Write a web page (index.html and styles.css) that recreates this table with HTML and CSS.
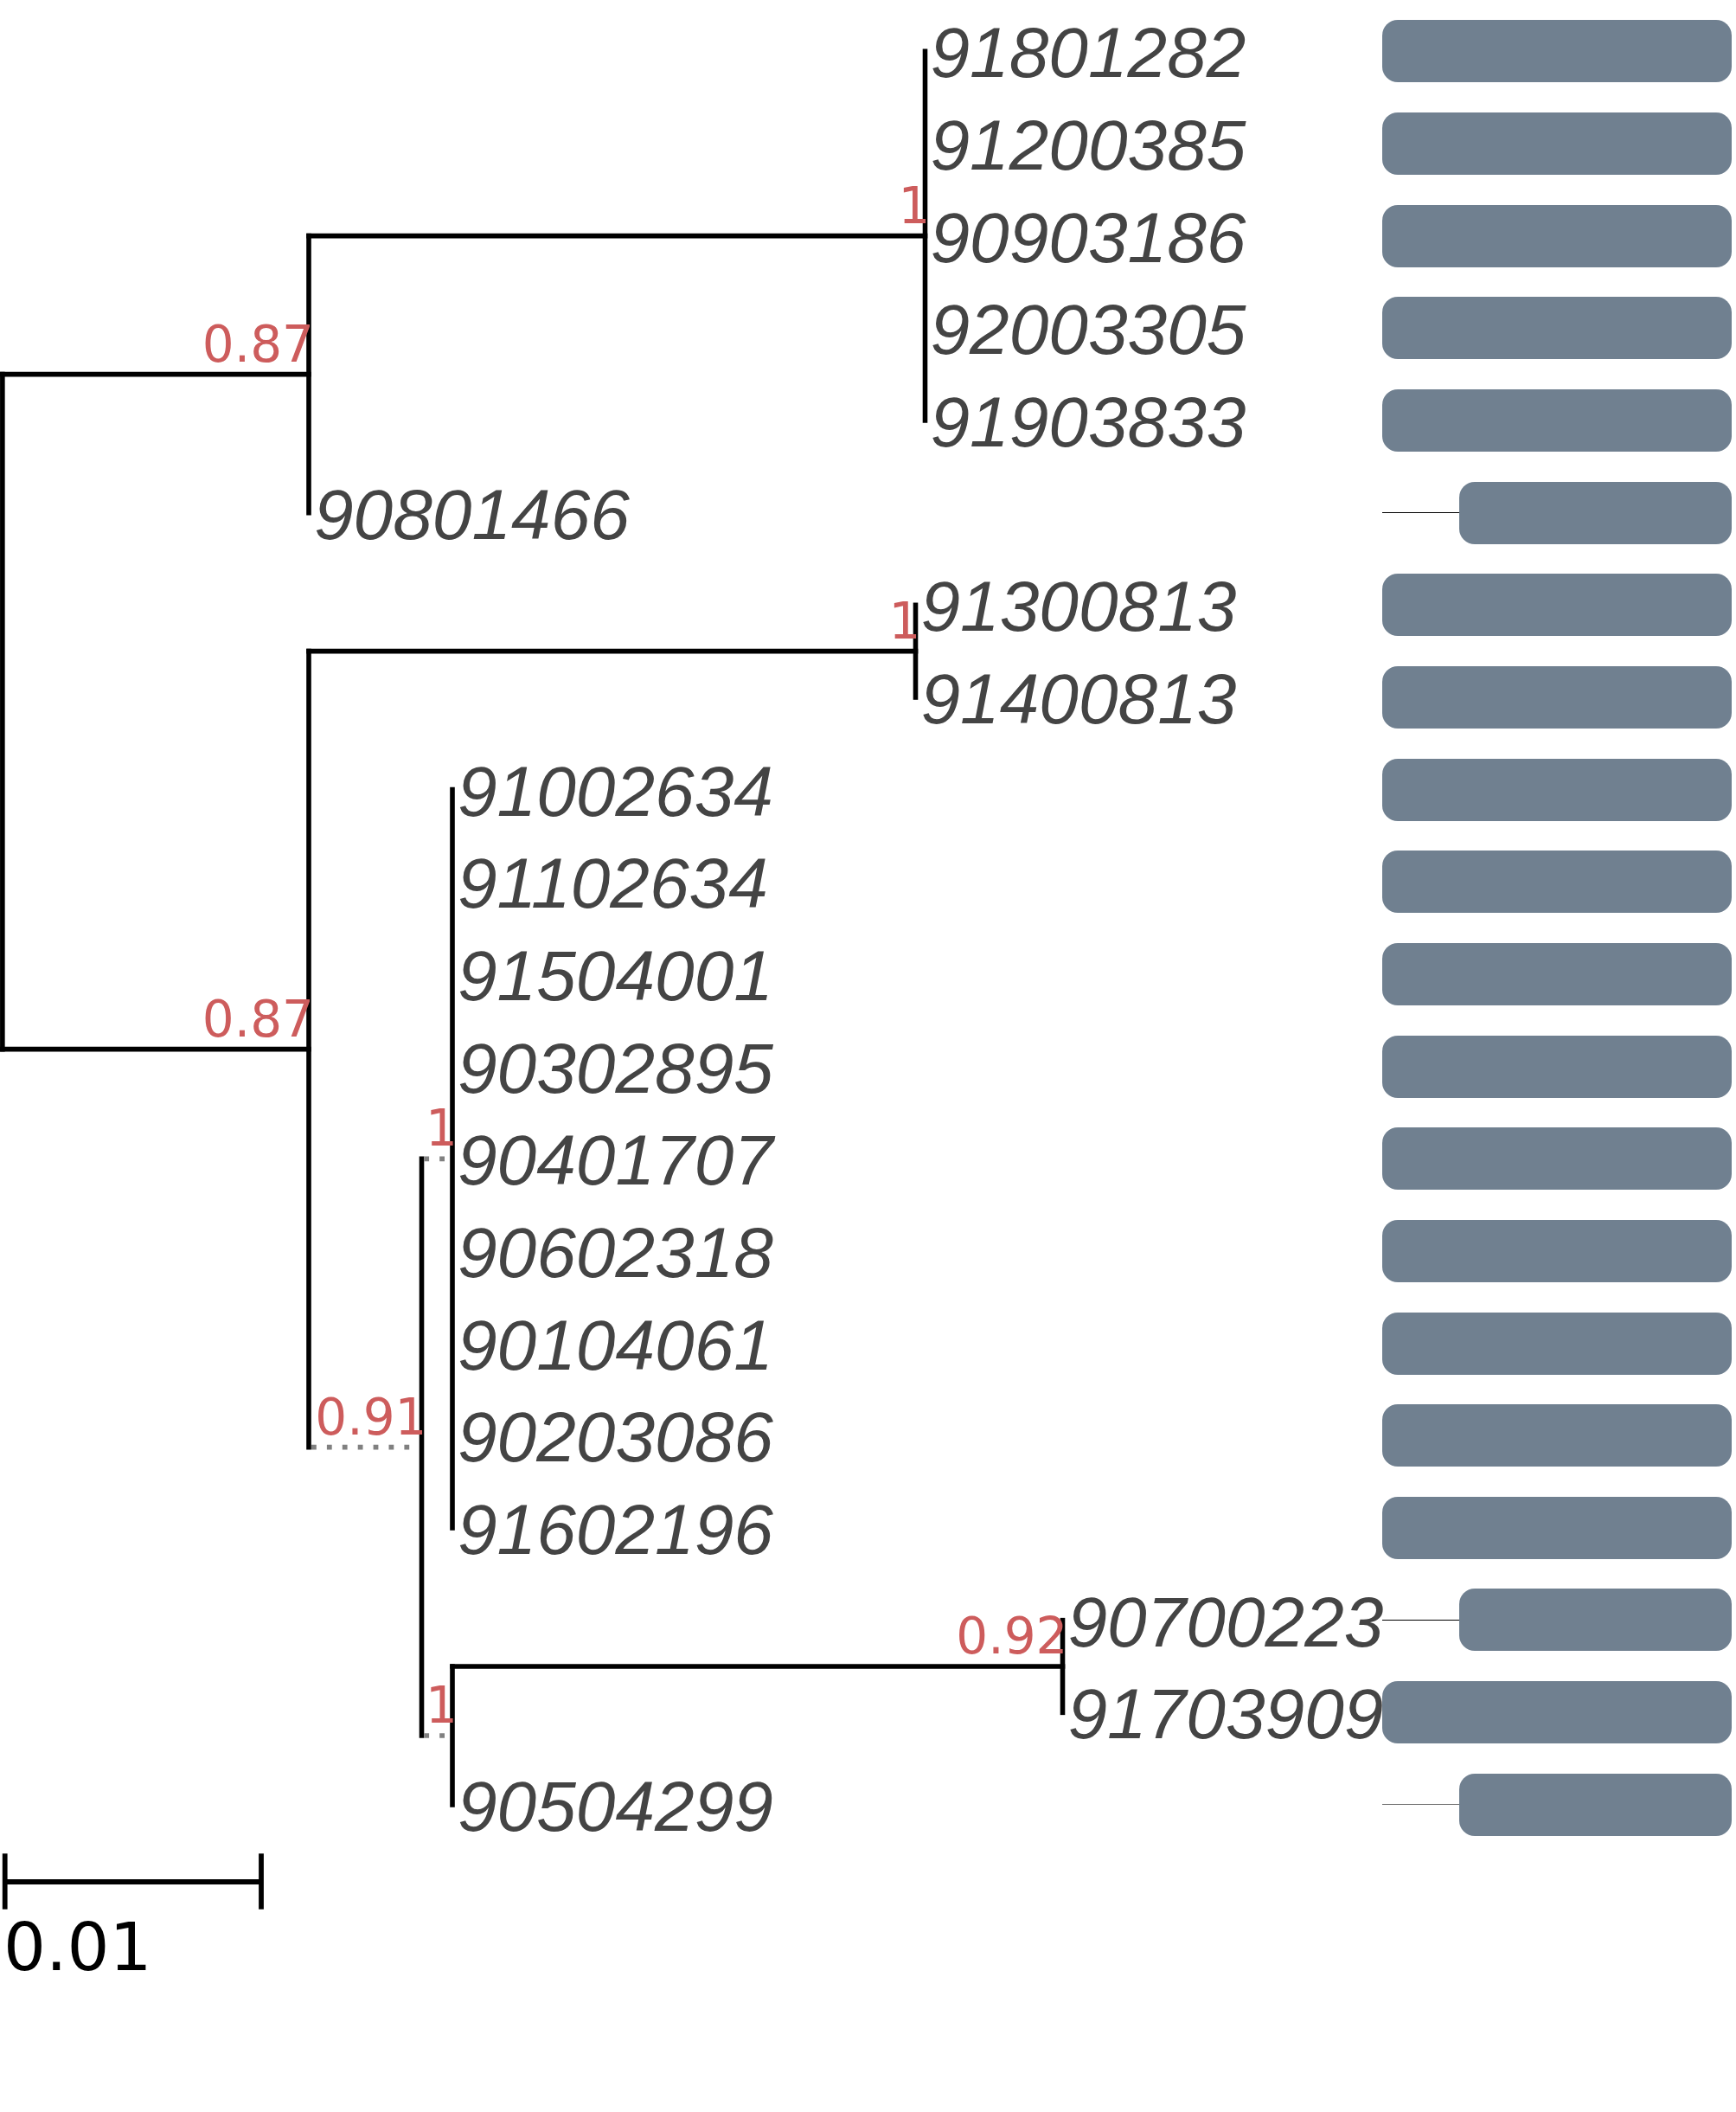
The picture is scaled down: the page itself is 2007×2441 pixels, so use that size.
FILE: index.html
```html
<!DOCTYPE html>
<html lang="en">
<head>
<meta charset="utf-8">
<title>Phylogenetic tree</title>
<link rel="stylesheet" href="styles.css">
</head>
<body>
<div class="figure">
  <svg class="tree" width="1598" height="2441" viewBox="0 0 1598 2441" xmlns="http://www.w3.org/2000/svg">
    <!-- solid branches -->
    <g class="branch">
      <line x1="2.85" y1="432.67" x2="2.85" y2="1212.67"/>
      <line x1="2.85" y1="432.67" x2="357" y2="432.67"/>
      <line x1="2.85" y1="1212.67" x2="357" y2="1212.67"/>
      <line x1="357" y1="272.67" x2="357" y2="592.67"/>
      <line x1="357" y1="272.67" x2="1069.5" y2="272.67"/>
      <line x1="1069.5" y1="59.33" x2="1069.5" y2="486"/>
      <line x1="357" y1="752.67" x2="357" y2="1672.67"/>
      <line x1="357" y1="752.67" x2="1058.5" y2="752.67"/>
      <line x1="1058.5" y1="699.33" x2="1058.5" y2="806"/>
      <line x1="487.5" y1="1339.33" x2="487.5" y2="2006"/>
      <line x1="523" y1="912.67" x2="523" y2="1766"/>
      <line x1="523" y1="1926" x2="523" y2="2086"/>
      <line x1="523" y1="1926" x2="1228.5" y2="1926"/>
      <line x1="1228.5" y1="1872.67" x2="1228.5" y2="1979.33"/>
    </g>
    <!-- dotted branches -->
    <g class="dotted">
      <line x1="360" y1="1672.67" x2="485" y2="1672.67"/>
      <line x1="490.3" y1="1339.33" x2="520" y2="1339.33"/>
      <line x1="490.3" y1="2006" x2="520" y2="2006"/>
    </g>
    <!-- support values -->
    <g class="support">
      <text x="1075.5" y="257.67">1</text>
      <text x="363" y="417.67">0.87</text>
      <text x="1064.5" y="737.67">1</text>
      <text x="363" y="1197.67">0.87</text>
      <text x="529" y="1324.33">1</text>
      <text x="493.5" y="1657.67">0.91</text>
      <text x="1234.5" y="1911">0.92</text>
      <text x="529" y="1991">1</text>
    </g>
    <!-- leaf names -->
    <g class="leaf">
      <text x="1075.5" y="89.33">91801282</text>
      <text x="1075.5" y="196">91200385</text>
      <text x="1075.5" y="302.67">90903186</text>
      <text x="1075.5" y="409.33">92003305</text>
      <text x="1075.5" y="516">91903833</text>
      <text x="363" y="622.67">90801466</text>
      <text x="1064.5" y="729.33">91300813</text>
      <text x="1064.5" y="836">91400813</text>
      <text x="529" y="942.67">91002634</text>
      <text x="529" y="1049.33">91102634</text>
      <text x="529" y="1156">91504001</text>
      <text x="529" y="1262.67">90302895</text>
      <text x="529" y="1369.33">90401707</text>
      <text x="529" y="1476">90602318</text>
      <text x="529" y="1582.67">90104061</text>
      <text x="529" y="1689.33">90203086</text>
      <text x="529" y="1796">91602196</text>
      <text x="1234.5" y="1902.67">90700223</text>
      <text x="1234.5" y="2009.33">91703909</text>
      <text x="529" y="2116">90504299</text>
    </g>
    <!-- scale bar -->
    <g class="scalebar">
      <line x1="5.7" y1="2175" x2="302" y2="2175"/>
      <line x1="5.7" y1="2142.3" x2="5.7" y2="2206.7"/>
      <line x1="302" y1="2142.3" x2="302" y2="2206.7"/>
    </g>
    <text class="scale-label" x="4" y="2276.7">0.01</text>
  </svg>
  <div class="bars">
    <div class="row"><div class="bar"></div></div>
    <div class="row"><div class="bar"></div></div>
    <div class="row"><div class="bar"></div></div>
    <div class="row"><div class="bar"></div></div>
    <div class="row"><div class="bar"></div></div>
    <div class="row short"><div class="stub"></div><div class="bar"></div></div>
    <div class="row"><div class="bar"></div></div>
    <div class="row"><div class="bar"></div></div>
    <div class="row"><div class="bar"></div></div>
    <div class="row"><div class="bar"></div></div>
    <div class="row"><div class="bar"></div></div>
    <div class="row"><div class="bar"></div></div>
    <div class="row"><div class="bar"></div></div>
    <div class="row"><div class="bar"></div></div>
    <div class="row"><div class="bar"></div></div>
    <div class="row"><div class="bar"></div></div>
    <div class="row"><div class="bar"></div></div>
    <div class="row short"><div class="stub"></div><div class="bar"></div></div>
    <div class="row"><div class="bar"></div></div>
    <div class="row short"><div class="stub stub-grey"></div><div class="bar"></div></div>
  </div>
</div>
</body>
</html>
```

FILE: styles.css
```css
html, body {
  margin: 0;
  padding: 0;
  background: #ffffff;
}

.figure {
  display: grid;
  grid-template-columns: 1598px 404px;
  width: 2007px;
  height: 2441px;
  overflow: hidden;
}

.tree {
  display: block;
  overflow: visible;
}

.branch line {
  stroke: #000000;
  stroke-width: 5.6;
  stroke-linecap: square;
  fill: none;
}

.dotted line {
  stroke: #808080;
  stroke-width: 5.6;
  stroke-dasharray: 5.8 12.1;
  stroke-linecap: butt;
  fill: none;
}

.scalebar line {
  stroke: #000000;
  stroke-width: 5.8;
  stroke-linecap: butt;
}

.support text {
  font-family: "DejaVu Sans", sans-serif;
  font-size: 58px;
  fill: #cd5c5c;
  text-anchor: end;
}

.leaf text {
  font-family: "Liberation Sans", Arial, sans-serif;
  font-style: italic;
  font-size: 82px;
  fill: #444444;
}

.scale-label {
  font-family: "DejaVu Sans", sans-serif;
  font-size: 77px;
  fill: #000000;
}

.bars {
  position: relative;
  z-index: 1;
  display: flex;
  flex-direction: column;
  padding-top: 6px;
}

.row {
  height: 106.667px;
  display: flex;
  align-items: center;
  flex: none;
}

.bar {
  flex: 1;
  height: 72px;
  border-radius: 18px;
  background: #708090;
}

.stub {
  width: 89px;
  height: 1px;
  background: #000000;
  flex: none;
}

.stub-grey {
  background: #707070;
}
```
